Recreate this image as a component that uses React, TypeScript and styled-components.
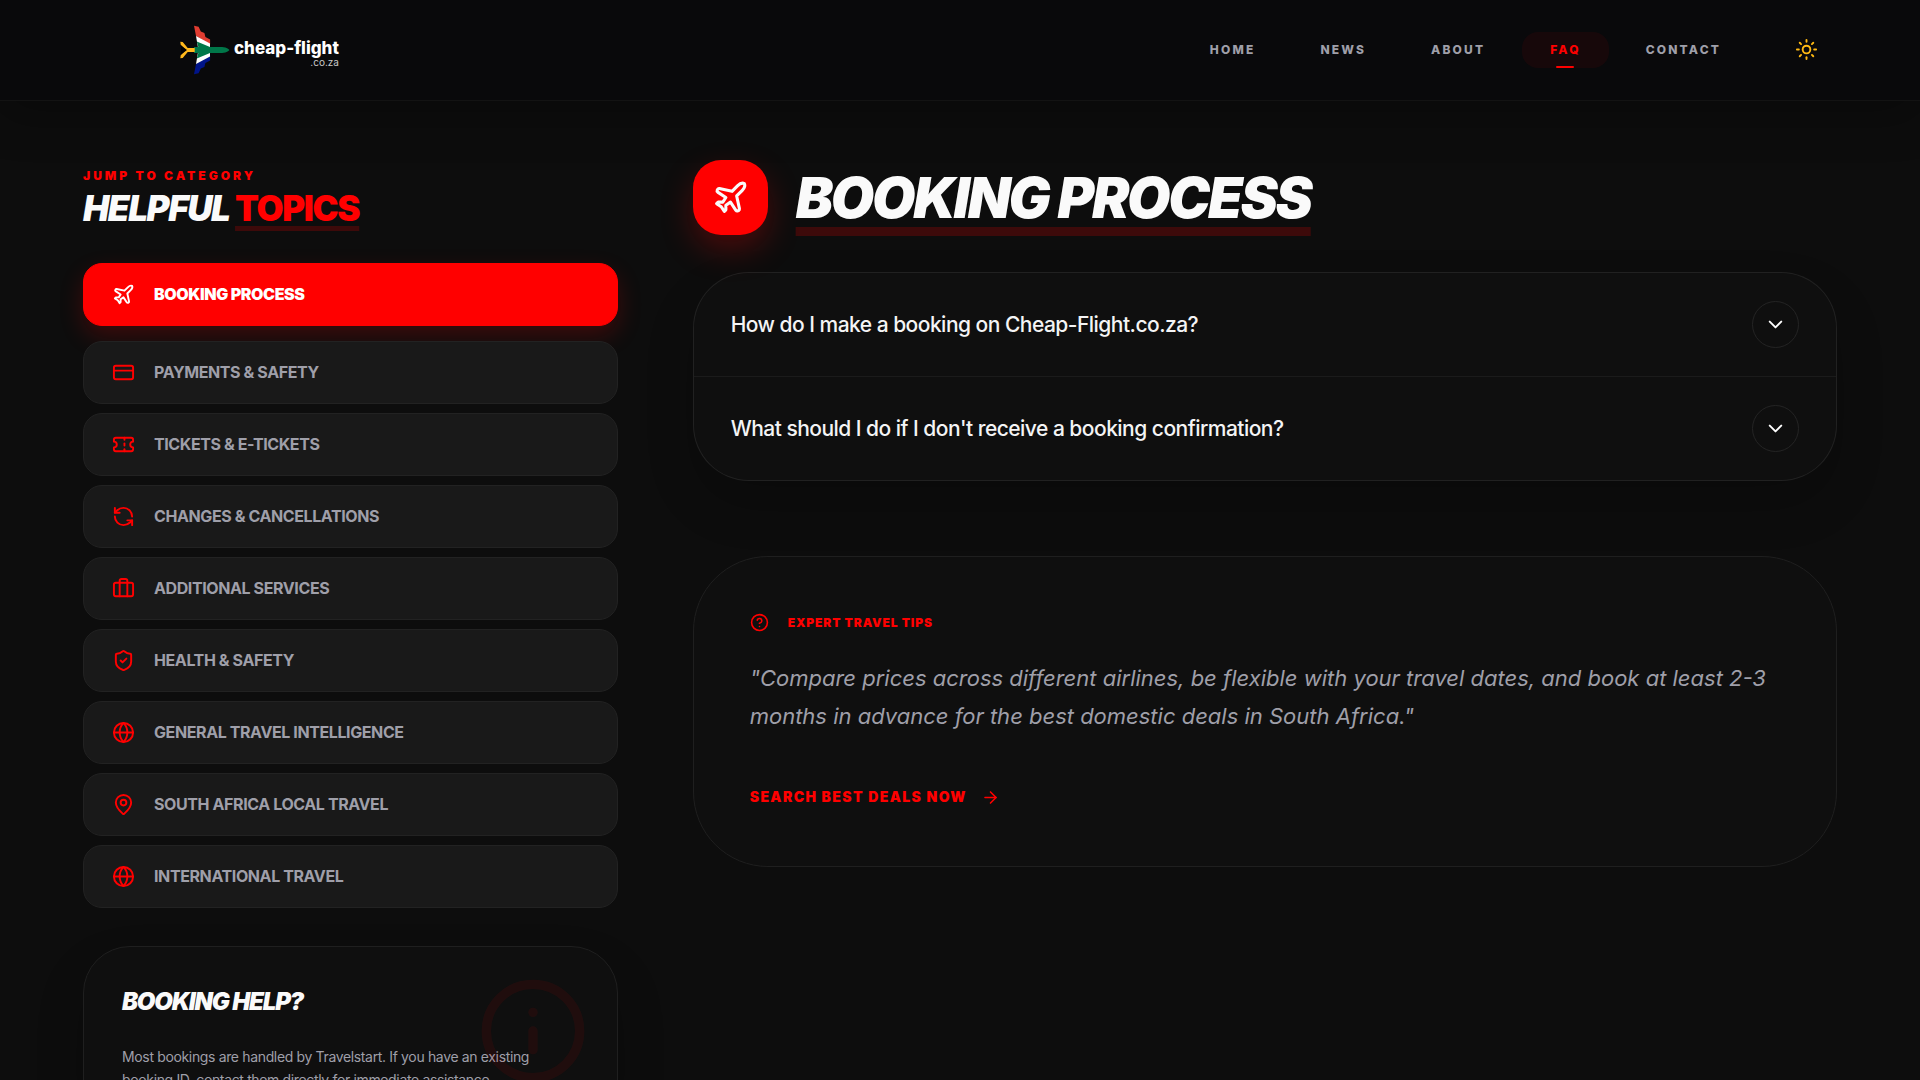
import React, { useState } from 'react';
import styled, { createGlobalStyle, css } from 'styled-components';
import {
  ArrowRight,
  Briefcase,
  ChevronDown,
  CircleHelp,
  CreditCard,
  Globe,
  Info,
  MapPin,
  Plane,
  RefreshCcw,
  ShieldCheck,
  Sun,
  Ticket,
  type LucideIcon,
} from 'lucide-react';

const red = '#ff0000';
const redUnderline = 'rgba(255, 0, 0, 0.2)';
const muted = '#9f9fa9';
const surface = '#0f0f0f';
const line = 'rgba(255, 255, 255, 0.08)';

const GlobalStyle = createGlobalStyle`
  *, *::before, *::after { box-sizing: border-box; }
  html { background: #0d0d0d; }
  body {
    margin: 0;
    min-height: 100vh;
    background: #0d0d0d;
    color: #fafafa;
    font-family: Inter, "Liberation Sans", sans-serif;
    -webkit-font-smoothing: antialiased;
  }
  h1, h2, h3, p, ul { margin: 0; padding: 0; }
  ul { list-style: none; }
  a { color: inherit; text-decoration: none; }
  button { font-family: inherit; color: inherit; cursor: pointer; }
`;

const Header = styled.header`
  border-bottom: 1px solid #131313;
  background: #09090b;
  box-shadow: 0 12px 48px rgba(0, 0, 0, 0.3);
`;

const HeaderInner = styled.div`
  display: flex;
  align-items: center;
  height: 100px;
  padding: 0 92px 1px;
`;

const Brand = styled.a`
  display: flex;
  align-items: center;
  gap: 4px;
  margin-right: auto;
  padding-left: 88px;
`;

const BrandText = styled.span`
  display: flex;
  flex-direction: column;
  align-items: flex-end;
  padding-top: 8px;
  color: #fff;
`;

const BrandName = styled.span`
  font-size: 17px;
  font-weight: 800;
  line-height: 17px;
`;

const BrandSuffix = styled.span`
  font-size: 10px;
  line-height: 10px;
  color: #c8c8c8;
`;

const Nav = styled.nav`
  display: flex;
  gap: 9px;
`;

const NavLink = styled.a<{ $active?: boolean }>`
  position: relative;
  padding: 10px 28px;
  border-radius: 16px;
  font-size: 12px;
  font-weight: 800;
  line-height: 16px;
  letter-spacing: 0.18em;
  text-transform: uppercase;
  color: ${muted};
  ${(p) =>
    p.$active &&
    css`
      color: ${red};
      background: rgba(255, 0, 0, 0.06);
      &::after {
        content: '';
        position: absolute;
        bottom: 0;
        left: calc(50% - 9px);
        width: 18px;
        height: 2px;
        border-radius: 1px;
        background: ${red};
      }
    `}
`;

const ThemeToggle = styled.button`
  display: grid;
  place-items: center;
  width: 43px;
  height: 43px;
  margin-left: 36px;
  padding: 0;
  border: 0;
  border-radius: 50%;
  background: none;
  color: #fdb813;
`;

const Main = styled.main`
  display: grid;
  grid-template-columns: repeat(12, minmax(0, 1fr));
  gap: 75px;
  padding: 59px 83px 75px;
`;

const Sidebar = styled.aside`
  grid-column: span 4;
  padding-top: 8px;
`;

const Content = styled.section`
  grid-column: span 8;
`;

const Eyebrow = styled.p`
  font-size: 12px;
  font-weight: 900;
  line-height: 16px;
  letter-spacing: 0.25em;
  text-transform: uppercase;
  color: ${red};
`;

const SidebarTitle = styled.h2`
  margin-top: 4px;
  font-size: 35px;
  font-weight: 900;
  font-style: italic;
  line-height: 40px;
  letter-spacing: -0.04em;
  text-transform: uppercase;
`;

const Accent = styled.span`
  font-style: normal;
  color: ${red};
  text-decoration: underline ${redUnderline};
  text-decoration-thickness: 5px;
  text-underline-offset: 5px;
`;

const CategoryList = styled.ul`
  display: flex;
  flex-direction: column;
  gap: 9px;
  margin-top: 35px;
`;

const CategoryItem = styled.li<{ $active: boolean }>`
  padding-bottom: ${(p) => (p.$active ? '6px' : '0')};
`;

const CategoryButton = styled.button<{ $active: boolean }>`
  display: flex;
  align-items: center;
  gap: 19px;
  width: 100%;
  padding: 19px 28px;
  border: 1px solid ${(p) => (p.$active ? red : '#222')};
  border-radius: 19px;
  background: ${(p) => (p.$active ? red : '#191919')};
  box-shadow: ${(p) => (p.$active ? '0 10px 24px rgba(255, 0, 0, 0.2)' : 'none')};
  color: ${(p) => (p.$active ? '#fff' : muted)};
  font-size: 16px;
  font-weight: ${(p) => (p.$active ? 900 : 700)};
  line-height: 23px;
  letter-spacing: -0.025em;
  text-align: left;
  text-transform: uppercase;

  svg { color: ${(p) => (p.$active ? '#fff' : red)}; }
`;

const HelpCard = styled.section`
  position: relative;
  margin-top: 38px;
  padding: 38px;
  border: 1px solid #1f1f1f;
  border-radius: 47px;
  background: ${surface};
  box-shadow: 0 24px 48px rgba(0, 0, 0, 0.2);
`;

const HelpMark = styled(Info)`
  position: absolute;
  top: 28px;
  right: 28px;
  color: ${red};
  opacity: 0.07;
`;

const HelpTitle = styled.h3`
  font-size: 24px;
  font-weight: 900;
  font-style: italic;
  line-height: 33px;
  letter-spacing: -0.05em;
  text-transform: uppercase;
`;

const HelpText = styled.p`
  margin-top: 27px;
  font-size: 14px;
  line-height: 23px;
  letter-spacing: -0.025em;
  color: ${muted};
`;

const TopicHeader = styled.div`
  display: flex;
  align-items: center;
  gap: 28px;
`;

const TopicIcon = styled.div`
  display: grid;
  place-items: center;
  width: 75px;
  height: 75px;
  border-radius: 28px;
  background: ${red};
  box-shadow: 0 14px 32px rgba(255, 0, 0, 0.25);
`;

const TopicTitle = styled.h1`
  font-size: 56px;
  font-weight: 900;
  font-style: italic;
  line-height: 56px;
  letter-spacing: -0.04em;
  text-transform: uppercase;
  text-decoration: underline ${redUnderline};
  text-decoration-thickness: 9px;
  text-underline-offset: 9px;
`;

const QuestionList = styled.ul`
  margin-top: 37px;
  border: 1px solid ${line};
  border-radius: 56px;
  background: ${surface};
  box-shadow: 0 24px 48px rgba(0, 0, 0, 0.2);
`;

const QuestionItem = styled.li`
  & + & { border-top: 1px solid rgba(255, 255, 255, 0.05); }
`;

const QuestionButton = styled.button`
  display: flex;
  align-items: center;
  justify-content: space-between;
  width: 100%;
  padding: 28px 37px;
  border: 0;
  background: none;
  color: #f4f4f5;
  font-size: 21px;
  font-weight: 500;
  line-height: 28px;
  letter-spacing: -0.025em;
  text-align: left;
`;

const ChevronCircle = styled.span`
  display: grid;
  place-items: center;
  width: 47px;
  height: 47px;
  border: 1px solid #242424;
  border-radius: 50%;
  color: #fff;
`;

const TipsCard = styled.section`
  margin-top: 75px;
  padding: 56px;
  border: 1px solid #1f1f1f;
  border-radius: 75px;
  background: ${surface};
`;

const TipsLabel = styled.h2`
  display: flex;
  align-items: center;
  gap: 19px;
  font-size: 12px;
  font-weight: 900;
  line-height: 19px;
  letter-spacing: 0.075em;
  text-transform: uppercase;
  color: ${red};
`;

const TipsQuote = styled.p`
  margin-top: 27px;
  font-size: 22px;
  font-style: italic;
  line-height: 38px;
  color: ${muted};
`;

const DealsLink = styled.a`
  display: inline-flex;
  align-items: center;
  gap: 14px;
  margin-top: 49px;
  font-size: 14px;
  font-weight: 900;
  line-height: 26px;
  letter-spacing: 0.1em;
  text-transform: uppercase;
  color: ${red};
`;

const PlaneFlag = () => (
  <svg width="50" height="50" viewBox="0 0 50 50" aria-hidden="true">
    <path d="M14 .8l4.600 1 2.200 4.800 3.600 1.400 1 4 4.700 2.400v5L16 11z" fill="#e03c31" />
    <path d="M14 49.200l4.600-1 2.200-4.800 3.600-1.400 1-4 4.700-2.400v-5L16 39z" fill="#001489" />
    <path d="M16 11l14 7.500v4H18zM16 39l14-7.500v-4H18z" fill="#fff" />
    <path
      d="M16.800 16.500L30 22h10c6 0 8.500 1.500 9.400 3-.9 1.500-3.400 3-9.400 3H30l-13.200 5.500 1.500-5.500H14v-6h4.300z"
      fill="#007749"
    />
    <path d="M.3 16.800l2.400.2 5 6h7v4h-7l-5 6-2.400.2.400-3L6 25 .7 19.800z" fill="#ffb81c" />
    <path d="M1 20.500L7 25l-6 4.500z" fill="#000" />
  </svg>
);

const navItems = ['Home', 'News', 'About', 'FAQ', 'Contact'];

const categories: { label: string; icon: LucideIcon }[] = [
  { label: 'Booking Process', icon: Plane },
  { label: 'Payments & Safety', icon: CreditCard },
  { label: 'Tickets & E-Tickets', icon: Ticket },
  { label: 'Changes & Cancellations', icon: RefreshCcw },
  { label: 'Additional Services', icon: Briefcase },
  { label: 'Health & Safety', icon: ShieldCheck },
  { label: 'General Travel Intelligence', icon: Globe },
  { label: 'South Africa Local Travel', icon: MapPin },
  { label: 'International Travel', icon: Globe },
];

const questions = [
  'How do I make a booking on Cheap-Flight.co.za?',
  "What should I do if I don't receive a booking confirmation?",
];

export default function App() {
  const [selected, setSelected] = useState(0);
  const current = categories[selected];
  const CurrentIcon = current.icon;

  return (
    <>
      <GlobalStyle />
      <Header>
        <HeaderInner>
          <Brand href="#home">
            <PlaneFlag />
            <BrandText>
              <BrandName>cheap-flight</BrandName>
              <BrandSuffix>.co.za</BrandSuffix>
            </BrandText>
          </Brand>
          <Nav>
            {navItems.map((item) => (
              <NavLink key={item} href={`#${item.toLowerCase()}`} $active={item === 'FAQ'}>
                {item}
              </NavLink>
            ))}
          </Nav>
          <ThemeToggle type="button" aria-label="Toggle theme">
            <Sun size={23} />
          </ThemeToggle>
        </HeaderInner>
      </Header>
      <Main>
        <Sidebar>
          <Eyebrow>Jump to category</Eyebrow>
          <SidebarTitle>
            Helpful <Accent>Topics</Accent>
          </SidebarTitle>
          <CategoryList>
            {categories.map(({ label, icon: Icon }, i) => (
              <CategoryItem key={label} $active={i === selected}>
                <CategoryButton type="button" $active={i === selected} onClick={() => setSelected(i)}>
                  <Icon size={23} />
                  {label}
                </CategoryButton>
              </CategoryItem>
            ))}
          </CategoryList>
          <HelpCard>
            <HelpMark size={112} />
            <HelpTitle>Booking Help?</HelpTitle>
            <HelpText>
              Most bookings are handled by Travelstart. If you have an existing booking ID, contact them directly for
              immediate assistance.
            </HelpText>
          </HelpCard>
        </Sidebar>
        <Content>
          <TopicHeader>
            <TopicIcon>
              <CurrentIcon size={37} />
            </TopicIcon>
            <TopicTitle>{current.label}</TopicTitle>
          </TopicHeader>
          <QuestionList>
            {questions.map((question) => (
              <QuestionItem key={question}>
                <QuestionButton type="button" aria-expanded={false}>
                  {question}
                  <ChevronCircle>
                    <ChevronDown size={23} />
                  </ChevronCircle>
                </QuestionButton>
              </QuestionItem>
            ))}
          </QuestionList>
          <TipsCard>
            <TipsLabel>
              <CircleHelp size={19} />
              Expert Travel Tips
            </TipsLabel>
            <TipsQuote>
              "Compare prices across different airlines, be flexible with your travel dates, and book at least 2-3
              months in advance for the best domestic deals in South Africa."
            </TipsQuote>
            <DealsLink href="#deals">
              Search best deals now
              <ArrowRight size={19} />
            </DealsLink>
          </TipsCard>
        </Content>
      </Main>
    </>
  );
}
